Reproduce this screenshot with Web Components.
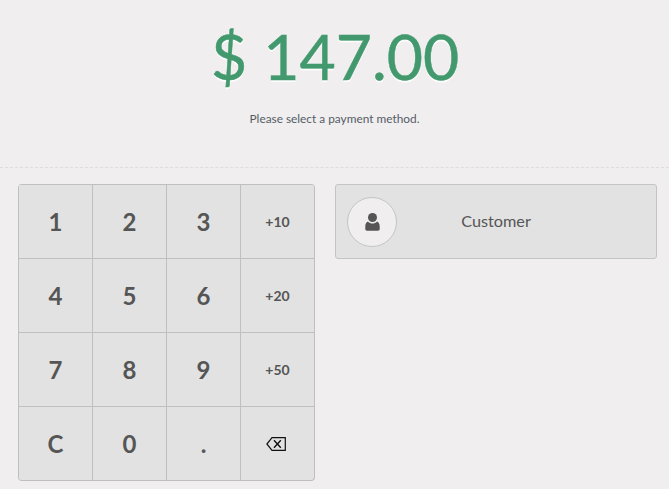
<!DOCTYPE html>
<html>
<head>
<meta charset="utf-8">
<style>
  html, body { margin: 0; padding: 0; height: 100%; overflow: hidden; }
  body { background: #f0eeef; font-family: Lato, "Liberation Sans", sans-serif; color: #555; }
</style>
</head>
<body>
<pay-screen>
  <pay-total slot="top" amount="$ 147.00">Please select a payment method.</pay-total>
  <num-pad slot="left"></num-pad>
  <customer-button slot="right">Customer</customer-button>
</pay-screen>

<script>
class PayScreen extends HTMLElement {
  constructor() {
    super()
    this.attachShadow({ mode: 'open' })
  }
  connectedCallback() {
    this.shadowRoot.innerHTML = /*html*/ `
      <style>
        :host{ display: block; }
        .top{ border-bottom: 1px dashed #dddddd; height: 167px; }
        .main{
          display: flex;
          align-items: flex-start;
          gap: 20px;
          padding: 16px 12px 0 18px;
        }
        .right{ flex: 1; }
      </style>
      <div class="top"><slot name="top"></slot></div>
      <div class="main">
        <slot name="left"></slot>
        <div class="right"><slot name="right"></slot></div>
      </div>
    `
  }
}

class PayTotal extends HTMLElement {
  constructor() {
    super()
    this.attachShadow({ mode: 'open' })
  }
  connectedCallback() {
    this.shadowRoot.innerHTML = /*html*/ `
      <style>
        :host{ display: block; text-align: center; padding-top: 16px; }
        h1{
          margin: 0 0 0 1px;
          font-size: 62.5px;
          line-height: 80px;
          font-weight: 400;
          color: #43996e;
          -webkit-text-stroke: 0.5px #43996e;
          text-shadow: 0 2px 1px #fff;
        }
        p{
          margin: 15px 0 0;
          font-size: 11.85px;
          line-height: 16px;
          color: #555c66;
        }
      </style>
      <h1>${this.getAttribute('amount')}</h1>
      <p><slot></slot></p>
    `
  }
}

class NumPad extends HTMLElement {
  constructor() {
    super()
    this.attachShadow({ mode: 'open' })
  }
  connectedCallback() {
    const keys = ['1','2','3','+10','4','5','6','+20','7','8','9','+50','C','0','.','back']
    const html = keys.map(k => {
      if (k === 'back') return `<button aria-label="Backspace"><svg width="20" height="14" viewBox="0 0 20 14" fill="none" stroke="#111" stroke-width="1.2"><path d="M6 .7H19.300V13.300H6L.9 7Z"/><path d="M8 3.300L14.800 10.700M14.800 3.300L8 10.700" stroke-width="1.400"/></svg></button>`
      const cls = k[0] === '+' ? 'small' : ''
      return `<button class="${cls}">${k}</button>`
    }).join('')
    this.shadowRoot.innerHTML = /*html*/ `
      <style>
        :host{ display: block; }
        .pad{
          display: grid;
          grid-template-columns: repeat(4, 74px);
          grid-auto-rows: 74px;
          width: 297px;
          box-sizing: border-box;
          background: #e2e2e2;
          border-right: 1px solid #bfbfbf;
          border-bottom: 1px solid #bfbfbf;
          border-radius: 4px;
          overflow: hidden;
        }
        button{
          all: unset;
          display: flex;
          align-items: center;
          justify-content: center;
          box-sizing: border-box;
          width: 74px;
          height: 74px;
          font: 700 24px Lato, sans-serif;
          color: #555;
          border-left: 1px solid #bfbfbf;
          border-top: 1px solid #bfbfbf;
        }
        button.small{ font-size: 14px; }
        button svg{ margin-right: 3px; }
      </style>
      <div class="pad">${html}</div>
    `
  }
}

class CustomerButton extends HTMLElement {
  constructor() {
    super()
    this.attachShadow({ mode: 'open' })
  }
  connectedCallback() {
    this.shadowRoot.innerHTML = /*html*/ `
      <style>
        :host{ display: block; }
        .box{
          display: flex;
          align-items: center;
          box-sizing: border-box;
          height: 75px;
          padding: 0 11px;
          background: #e2e2e2;
          border: 1px solid #c4c4c4;
          border-radius: 3px;
        }
        .avatar{
          display: flex;
          align-items: center;
          justify-content: center;
          box-sizing: border-box;
          width: 50px;
          height: 50px;
          flex: none;
          background: #f0eeef;
          border: 1px solid #c4c4c4;
          border-radius: 50%;
        }
        .name{
          flex: 1;
          text-align: center;
          font-size: 16.25px;
          line-height: 20px;
          color: #555;
          padding: 0 50px 2px 0;
        }
      </style>
      <div class="box">
        <span class="avatar">
          <svg width="15" height="18" viewBox="0 0 15 18" fill="#555"><circle cx="7.500" cy="4.500" r="4.500"/><path d="M3 8.500C1 9.500 .3 11 .3 13.500V16c0 1 .8 1.700 1.700 1.700H13c1 0 1.700-.7 1.700-1.700V13.500C14.700 11 14 9.500 12 8.500 10.800 10 9.300 10.500 7.500 10.500S4.200 10 3 8.500Z"/></svg>
        </span>
        <span class="name"><slot></slot></span>
      </div>
    `
  }
}

customElements.define('pay-screen', PayScreen)
customElements.define('pay-total', PayTotal)
customElements.define('num-pad', NumPad)
customElements.define('customer-button', CustomerButton)
</script>
</body>
</html>
